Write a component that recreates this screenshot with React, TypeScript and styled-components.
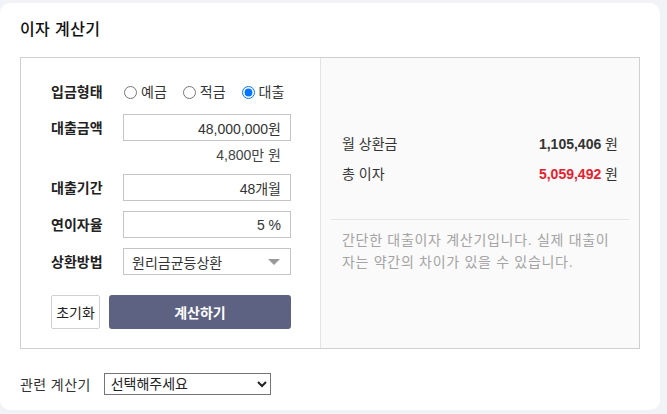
import React from "react";
import styled, { createGlobalStyle } from "styled-components";

const GlobalStyle = createGlobalStyle`
  html, body {
    margin: 0;
    padding: 0;
    background: #f2f3f7;
  }
  body {
    font-family: "Liberation Sans", "Noto Sans CJK KR", sans-serif;
    color: #333;
    font-size: 14px;
  }
  * { box-sizing: border-box; }
`;

const Card = styled.div`
  width: 660px;
  height: 407px;
  margin-top: 3px;
  background: #fff;
  border-radius: 10px;
  padding: 17px 20px 0;
`;

const Title = styled.h2`
  margin: 0 0 17px;
  font-size: 16px;
  line-height: 20px;
  font-weight: 500;
  letter-spacing: 0.4px;
  color: #111;
`;

const CalcBox = styled.div`
  display: flex;
  width: 620px;
  height: 292px;
  border: 1px solid #cfcfcf;
`;

const FormPanel = styled.div`
  width: 300px;
  padding: 22px 29px 20px 30px;
  border-right: 1px solid #e3e3e3;
  display: flex;
  flex-direction: column;
`;

const Row = styled.div<{ $gap?: number }>`
  display: flex;
  align-items: center;
  margin-top: ${(p) => p.$gap ?? 10}px;
`;

const Label = styled.div`
  width: 72px;
  flex: none;
  font-weight: 700;
  color: #222;
  line-height: 24px;
`;

const Radios = styled.div`
  display: flex;
  flex: none;
  align-items: center;
  height: 24px;
  white-space: nowrap;
`;

const RadioLabel = styled.label`
  display: flex;
  flex: none;
  align-items: center;
  margin-right: 15px;
  color: #333;
  line-height: 20px;
  input {
    width: 13px;
    height: 13px;
    margin: 0 4px 0 1px;
  }
`;

const Field = styled.div`
  width: 168px;
  height: 27px;
  border: 1px solid #c4c4c4;
  display: flex;
  align-items: center;
  justify-content: flex-end;
  padding: 0 9px;
  color: #333;
`;

const SelectField = styled(Field)`
  justify-content: space-between;
  padding: 0 10px 0 8px;
`;

const Arrow = styled.span`
  width: 0;
  height: 0;
  border-left: 6px solid transparent;
  border-right: 6px solid transparent;
  border-top: 6px solid #999;
`;

const Hint = styled.div`
  margin: 4px 0 0 72px;
  width: 168px;
  padding-right: 10px;
  text-align: right;
  line-height: 20px;
  color: #444;
`;

const Buttons = styled.div`
  display: flex;
  gap: 9px;
  margin-top: 20px;
`;

const ResetButton = styled.button`
  width: 49px;
  height: 34px;
  border: 1px solid #d0d0d0;
  background: #fff;
  font: inherit;
  color: #222;
  padding: 0;
  border-radius: 2px;
`;

const SubmitButton = styled.button`
  width: 182px;
  height: 34px;
  border: none;
  border-radius: 3px;
  background: #5d6282;
  color: #fff;
  font: inherit;
  font-weight: 700;
`;

const ResultPanel = styled.div`
  flex: 1;
  background: #fafafa;
  padding-top: 70px;
`;

const ResultRow = styled.div`
  display: flex;
  justify-content: space-between;
  align-items: center;
  height: 30px;
  padding: 0 21px;
  color: #333;
`;

const Value = styled.span<{ $red?: boolean }>`
  b {
    font-weight: 700;
    color: ${(p) => (p.$red ? "#e5212f" : "#333")};
  }
`;

const Divider = styled.hr`
  border: none;
  height: 1px;
  background: #e6e6e6;
  margin: 31px 10px 0;
`;

const Note = styled.p`
  margin: 9px 0 0;
  padding: 0 21px;
  font-size: 14px;
  line-height: 22px;
  letter-spacing: 0.7px;
  color: #a3a3a3;
  white-space: nowrap;
`;

const Related = styled.div`
  display: flex;
  align-items: center;
  margin-top: 24px;
`;

const RelatedLabel = styled.span`
  margin-right: 13px;
  letter-spacing: 0.4px;
  color: #333;
`;

const RelatedSelect = styled.select`
  width: 167px;
  height: 22px;
  border: 1px solid #767676;
  border-radius: 0;
  background: #fff;
  font: inherit;
  color: #222;
  padding: 0 2px;
`;

export default function App() {
  return (
    <>
      <GlobalStyle />
      <Card>
        <Title>이자 계산기</Title>
        <CalcBox>
          <FormPanel>
            <Row $gap={0}>
              <Label>입금형태</Label>
              <Radios>
                <RadioLabel>
                  <input type="radio" name="kind" />
                  예금
                </RadioLabel>
                <RadioLabel>
                  <input type="radio" name="kind" />
                  적금
                </RadioLabel>
                <RadioLabel>
                  <input type="radio" name="kind" defaultChecked />
                  대출
                </RadioLabel>
              </Radios>
            </Row>
            <Row>
              <Label>대출금액</Label>
              <Field>48,000,000원</Field>
            </Row>
            <Hint>4,800만 원</Hint>
            <Row $gap={9}>
              <Label>대출기간</Label>
              <Field>48개월</Field>
            </Row>
            <Row>
              <Label>연이자율</Label>
              <Field>5 %</Field>
            </Row>
            <Row>
              <Label>상환방법</Label>
              <SelectField>
                <span>원리금균등상환</span>
                <Arrow />
              </SelectField>
            </Row>
            <Buttons>
              <ResetButton>초기화</ResetButton>
              <SubmitButton>계산하기</SubmitButton>
            </Buttons>
          </FormPanel>
          <ResultPanel>
            <ResultRow>
              <span>월 상환금</span>
              <Value>
                <b>1,105,406</b> 원
              </Value>
            </ResultRow>
            <ResultRow>
              <span>총 이자</span>
              <Value $red>
                <b>5,059,492</b> 원
              </Value>
            </ResultRow>
            <Divider />
            <Note>
              간단한 대출이자 계산기입니다. 실제 대출이
              <br />
              자는 약간의 차이가 있을 수 있습니다.
            </Note>
          </ResultPanel>
        </CalcBox>
        <Related>
          <RelatedLabel>관련 계산기</RelatedLabel>
          <RelatedSelect defaultValue="">
            <option value="">선택해주세요</option>
          </RelatedSelect>
        </Related>
      </Card>
    </>
  );
}
